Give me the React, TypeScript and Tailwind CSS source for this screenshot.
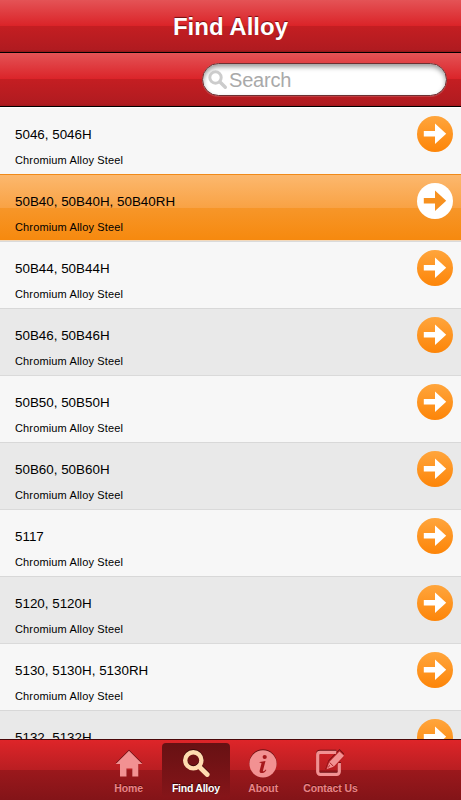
import { useState } from 'react'
import clsx from 'clsx'

interface Alloy {
  name: string
  family: string
}

const ALLOYS: Alloy[] = [
  { name: '5046, 5046H', family: 'Chromium Alloy Steel' },
  { name: '50B40, 50B40H, 50B40RH', family: 'Chromium Alloy Steel' },
  { name: '50B44, 50B44H', family: 'Chromium Alloy Steel' },
  { name: '50B46, 50B46H', family: 'Chromium Alloy Steel' },
  { name: '50B50, 50B50H', family: 'Chromium Alloy Steel' },
  { name: '50B60, 50B60H', family: 'Chromium Alloy Steel' },
  { name: '5117', family: 'Chromium Alloy Steel' },
  { name: '5120, 5120H', family: 'Chromium Alloy Steel' },
  { name: '5130, 5130H, 5130RH', family: 'Chromium Alloy Steel' },
  { name: '5132, 5132H', family: 'Chromium Alloy Steel' },
]

const TABS = ['Home', 'Find Alloy', 'About', 'Contact Us']

function ArrowBadge({ selected }: { selected: boolean }) {
  return (
    <svg width="36" height="36" viewBox="0 0 36 36" className="shrink-0">
      <defs>
        <linearGradient id="badge" x1="0" y1="0" x2="0" y2="1">
          <stop offset="0" stopColor="#ffa53c" />
          <stop offset="1" stopColor="#fd8508" />
        </linearGradient>
      </defs>
      <circle cx="18" cy="18" r="18" fill={selected ? '#fff' : 'url(#badge)'} />
      <path d="M6.800 15h11.200V7.500l11.200 10.200-11.200 10.200V20.500H6.800z" fill={selected ? '#f7911f' : '#fff'} />
    </svg>
  )
}

function TabIcon({ name }: { name: string }) {
  if (name === 'Home') {
    return (
      <svg width="28" height="28" viewBox="0 0 28 28" className="drop-shadow-[0_-1px_0_#6b1013]">
        <path d="M14 .7 27.300 14H23.300V26.500H17.300v-8h-5.800v8H5V14H.7z" fill="#f29192" />
      </svg>
    )
  }
  if (name === 'Find Alloy') {
    return (
      <svg width="28" height="28" viewBox="0 0 28 28" className="drop-shadow-[0_-1px_0_#3c0809]">
        <circle cx="11.300" cy="10.300" r="8.100" fill="none" stroke="#ffdcb0" strokeWidth="4.400" />
        <path d="m17 16.500 8.200 8" stroke="#ffdcb0" strokeWidth="4.800" strokeLinecap="round" />
      </svg>
    )
  }
  if (name === 'About') {
    return (
      <svg width="28" height="28" viewBox="0 0 28 28" className="drop-shadow-[0_-1px_0_#6b1013]">
        <circle cx="14" cy="13.800" r="13.600" fill="#f29192" />
        <circle cx="15.700" cy="7" r="2.100" fill="#a5181c" />
        <path
          d="M10.700 12c2-.3 3.900-.7 5.800-1.100l-2.500 9.700c-.2.900.4.900 1 .5.700-.4 1.200-1.100 1.700-1.700l.7.500c-1.500 2.200-3.100 3.300-4.800 3.200-1.700-.1-2.300-1.100-1.900-2.800l1.700-6.500c.2-.9-.2-1.100-1.900-1.100z"
          fill="#a5181c"
        />
      </svg>
    )
  }
  return (
    <svg width="28" height="28" viewBox="0 0 28 28" className="drop-shadow-[0_-1px_0_#6b1013]">
      <path
        d="M20.300 2.300H4.200A2.500 2.500 0 0 0 1.700 4.800v17a2.500 2.500 0 0 0 2.500 2.500h16.600a2.500 2.500 0 0 0 2.500-2.500V13"
        fill="none"
        stroke="#f29192"
        strokeWidth="3.200"
      />
      {/* red edge lets the pencil cut through the frame */}
      <path d="M10.800 19 13.300 12 23.500 1.500 28 5.800 17.700 16.700z" fill="none" stroke="#b91e22" strokeWidth="2" />
      <path d="M10.800 19 13.300 12 23.500 1.500 28 5.800 17.700 16.700z" fill="#f29192" />
      <path d="m13.500 12.400 4 3.900M12.300 17.500l1.300-2.200" stroke="#a4191d" strokeWidth=".9" />
    </svg>
  )
}

export default function App() {
  const [selected, setSelected] = useState(1)
  const [tab, setTab] = useState('Find Alloy')
  const [query, setQuery] = useState('')

  return (
    <div className="flex flex-col h-screen overflow-hidden bg-[#f7f7f7] font-['Liberation_Sans',Arial,sans-serif] text-black">
      {/* Title bar */}
      <header className="h-[53px] shrink-0 border-b border-black bg-[linear-gradient(#e45356_0%,#db2429_49%,#c41e22_50%,#b01b20_96%,#8f1518_100%)] flex items-center justify-center">
        <h1 className="text-[24px] leading-7 font-bold text-white pt-0.5 [text-shadow:0_-1px_1px_rgba(70,0,0,0.7)]">Find Alloy</h1>
      </header>

      {/* Search bar */}
      <div className="h-[54px] shrink-0 border-b border-black bg-[linear-gradient(#e45356_0%,#db2429_49%,#c41e22_50%,#b01b20_96%,#a0181c_100%)] flex items-center justify-end pr-3.5">
        <label className="w-[245px] h-[33px] flex items-center rounded-full border border-[#6c3032] bg-white pl-[5px] shadow-[inset_0_3px_5px_rgba(0,0,0,0.4),0_1px_0_rgba(255,255,255,0.15)]">
          <svg width="20" height="20" viewBox="0 0 20 20" className="shrink-0">
            <circle cx="7.500" cy="7.500" r="5.700" fill="none" stroke="#ccc" strokeWidth="3" />
            <path d="m12 12 5.300 5.300" stroke="#ccc" strokeWidth="3.400" strokeLinecap="round" />
          </svg>
          <input
            value={query}
            onChange={e => setQuery(e.target.value)}
            placeholder="Search"
            className="min-w-0 flex-1 ml-px bg-transparent outline-none text-[20px] leading-6 tracking-[-0.2px] placeholder:text-[#a9a9a9]"
          />
        </label>
      </div>

      {/* Results */}
      <main className="flex-1 min-h-0 overflow-hidden">
        {ALLOYS.map((alloy, i) => (
          <div
            key={alloy.name}
            onClick={() => setSelected(i)}
            className={clsx(
              'h-[67px] flex items-start justify-between pl-[15px] pr-2 pt-2 border-t',
              i === selected
                ? 'border-[#f08a1a] bg-[linear-gradient(#fcb86e_0px,#f9a244_33px,#f79629_33px,#f6890e_65px,#f3d9bb_65px)]'
                : i % 2 ? 'border-[#d8d8d8] bg-[#e9e9e9]' : i === 0 ? 'border-white bg-[#f7f7f7]' : 'border-[#dadada] bg-[#f7f7f7]',
            )}
          >
            <div className="pt-[11px]">
              <p className="text-[13.400px] leading-4">{alloy.name}</p>
              <p className="text-[11px] leading-4 mt-[9px] tracking-[0.150px]">{alloy.family}</p>
            </div>
            <ArrowBadge selected={i === selected} />
          </div>
        ))}
      </main>

      {/* Tab bar */}
      <nav className="h-[61px] shrink-0 border-t border-[#4a0709] bg-[linear-gradient(#de2529_0px,#b91e22_30px,#9b181c_30px,#831418_60px)] flex justify-center pt-[3px] pr-[2px]">
        {TABS.map(name => (
          <button
            key={name}
            onClick={() => setTab(name)}
            className={clsx(
              'w-[67.300px] h-[54px] flex flex-col items-center pt-[7px] rounded text-[10.500px] leading-3 font-bold whitespace-nowrap',
              name === tab
                ? 'bg-[linear-gradient(#671113,#851519)] text-white tracking-[-0.250px] [text-shadow:0_-1px_1px_#2a0405]'
                : 'text-[#e98587] tracking-[-0.100px] [text-shadow:0_-1px_0_#5a0c0e]',
            )}
          >
            <TabIcon name={name} />
            <span className="mt-1">{name}</span>
          </button>
        ))}
      </nav>
    </div>
  )
}
